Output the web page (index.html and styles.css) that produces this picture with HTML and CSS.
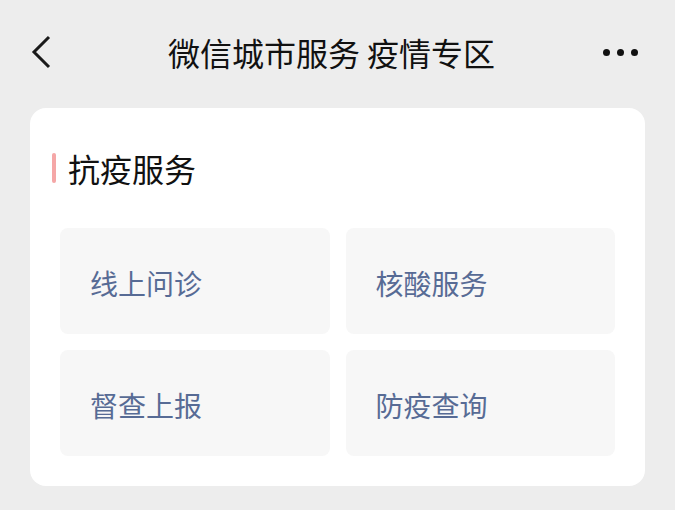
FILE: index.html
```html
<!DOCTYPE html>
<html lang="zh-CN">
<head>
<meta charset="utf-8">
<title>微信城市服务 疫情专区</title>
<link rel="stylesheet" href="styles.css">
</head>
<body>
<div class="nav">
  <div class="nav-back">
    <svg width="24" height="36" viewBox="0 0 24 36"><polyline points="19,3 4,18 19,33" fill="none" stroke="#1a1a1a" stroke-width="3"/></svg>
  </div>
  <div class="nav-title">微信城市服务 疫情专区</div>
  <div class="nav-more">
    <span class="dot"></span><span class="dot"></span><span class="dot"></span>
  </div>
</div>
<div class="card">
  <div class="card-head">
    <span class="bar"></span>
    <span class="head-text">抗疫服务</span>
  </div>
  <div class="grid">
    <div class="tile">线上问诊</div>
    <div class="tile">核酸服务</div>
    <div class="tile">督查上报</div>
    <div class="tile">防疫查询</div>
  </div>
</div>
</body>
</html>
```
FILE: styles.css
```css
html, body {
  margin: 0;
  padding: 0;
  background: #ededed;
}
body {
  font-family: "Noto Sans CJK SC", "Noto Sans", sans-serif;
  color: #111;
  width: 675px;
  height: 510px;
  overflow: hidden;
}
.nav {
  height: 104px;
  display: flex;
  align-items: center;
  justify-content: space-between;
  padding: 0 37px 0 30px;
  box-sizing: border-box;
}
.nav-back {
  width: 60px;
  display: flex;
  align-items: center;
}
.nav-back svg {
  display: block;
}
.nav-title {
  font-size: 32px;
  line-height: 40px;
  color: #111;
  flex: 1;
  text-align: center;
}
.nav-more {
  width: 65px;
  display: flex;
  justify-content: flex-end;
  align-items: center;
  gap: 7px;
}
.dot {
  width: 7px;
  height: 7px;
  border-radius: 50%;
  background: #111;
}
.card {
  margin: 4px 30px 0;
  background: #fff;
  border-radius: 16px;
  padding: 45px 30px 30px;
}
.card-head {
  display: flex;
  align-items: center;
  height: 30px;
  margin-left: -8px;
}
.bar {
  width: 4px;
  height: 30px;
  background: #f5a7a7;
  border-radius: 2px;
  margin-right: 12px;
}
.head-text {
  font-size: 32px;
  line-height: 30px;
  color: #111;
}
.grid {
  margin-top: 45px;
  display: grid;
  grid-template-columns: 1fr 1fr;
  gap: 16px;
}
.tile {
  height: 106px;
  background: #f7f7f7;
  border-radius: 8px;
  display: flex;
  align-items: center;
  padding: 4px 0 0 30px;
  box-sizing: border-box;
  font-size: 28px;
  color: #576b95;
}
```
